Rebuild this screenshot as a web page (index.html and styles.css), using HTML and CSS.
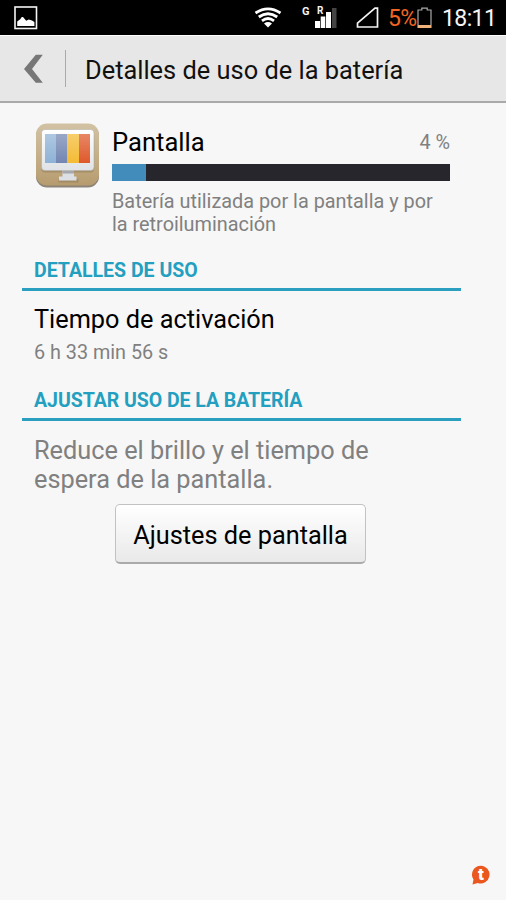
FILE: index.html
```html
<!DOCTYPE html>
<html lang="es">
<head>
<meta charset="utf-8">
<title>Detalles de uso de la batería</title>
<link rel="stylesheet" href="styles.css">
</head>
<body>
<div class="statusbar">
  <svg class="shot" width="24" height="24" viewBox="0 0 24 24"><rect x="1" y="1" width="21.500" height="21.500" fill="none" stroke="#f4f4f4" stroke-width="1.600"/><path d="M3.200 20v-4.500l3-2.300 1.600-2.100 1.200 0 3.200 3.600 2.600-1.200 3.200 1 2.400 1.500V20z" fill="#fff"/></svg>
  <svg class="wifi" width="28" height="22" viewBox="0 0 28 22"><g fill="none" stroke="#fff" stroke-width="2.800"><path d="M1.500 6Q14 -2.200 26.500 6"/><path d="M4.800 10Q14 3.400 23.200 10"/><path d="M8 13.800Q14 9.200 20 13.800"/></g><path d="M10 16.500Q14 13.600 18 16.500L14 20.500z" fill="#fff"/></svg>
  <span class="net">G</span>
  <span class="cell"><span class="roam">R</span><svg width="22" height="22" viewBox="0 0 22 22"><path d="M0 14h5v7H0zM5.700 9.500h4.600V21H5.700zM11 5h5v16h-5z" fill="#fff"/><path d="M17 1h4.500v20H17z" fill="#444"/></svg></span>
  <svg class="sim" width="24" height="22" viewBox="0 0 24 22"><path d="M21.500 1.200V20H1.500v-3.800L19 1.200z" fill="none" stroke="#f4f4f4" stroke-width="1.700"/></svg>
  <span class="level">5%</span>
  <svg class="battery" width="16" height="22" viewBox="0 0 16 22"><path d="M4.800 3V1.200h5.400V3h3.800v17.500H1V3z" fill="none" stroke="#aaa" stroke-width="1.200"/><path d="M1 18h13v3H1z" fill="#efb27a"/></svg>
  <span class="clock">18:11</span>
</div>
<header class="actionbar">
  <svg class="back" width="20" height="30" viewBox="0 0 20 30"><path d="M11.800 .8H18.800L8 15 18.800 28.800H11.800L0 15z" fill="#777"/></svg>
  <span class="divider"></span>
  <h1>Detalles de uso de la batería</h1>
</header>
<main>
  <section class="summary">
    <svg class="appicon" width="66" height="68" viewBox="0 0 66 68">
      <defs>
        <linearGradient id="tan" x2="0" y2="1"><stop stop-color="#d2c2a4"/><stop offset=".5" stop-color="#c5b08a"/><stop offset="1" stop-color="#b69b6e"/></linearGradient>
        <linearGradient id="frame" x2="0" y2="1"><stop stop-color="#fff"/><stop offset="1" stop-color="#dfe2e6"/></linearGradient>
        <linearGradient id="shine" x2="0" y2="1"><stop stop-color="#fff" stop-opacity=".28"/><stop offset="1" stop-color="#fff" stop-opacity="0"/></linearGradient>
      </defs>
      <rect x="2" y="3" width="63" height="62.500" rx="11" fill="#8c8477"/>
      <rect x="2" y="1.500" width="63" height="62" rx="11" fill="url(#tan)"/>
      <rect x="7.200" y="10" width="53" height="40.500" rx="4" fill="#8f7a55" opacity=".5"/>
      <path d="M24.500 57h20v3.500h-20z" fill="#8f7a55" opacity=".5"/>
      <path d="M28.500 48h11.500v6.500h2.500V58.500H25V54.500h3.500z" fill="#dce0e5"/>
      <path d="M28.500 48.500h11.500v3H28.500z" fill="#a5a9ad"/>
      <rect x="7.500" y="7.500" width="52.500" height="41" rx="3.500" fill="url(#frame)" stroke="#b5b1aa" stroke-width=".6"/>
      <path d="M11 12h11v29H11z" fill="#8eb2d6"/><path d="M22 12h11.500v29H22z" fill="#7386b2"/><path d="M33.500 12H45v29H33.500z" fill="#f4bb34"/><path d="M45 12H56v29H45z" fill="#df592b"/>
      <path d="M11 12h45v29H11z" fill="url(#shine)"/>
    </svg>
    <div class="info">
      <div class="row"><h2>Pantalla</h2><span class="percent">4 %</span></div>
      <div class="meter"><div class="fill"></div></div>
      <p>Batería utilizada por la pantalla y por<br>la retroiluminación</p>
    </div>
  </section>
  <h3>DETALLES DE USO</h3>
  <div class="item"><div class="label">Tiempo de activación</div><div class="value">6 h 33 min 56 s</div></div>
  <h3 class="adjust">AJUSTAR USO DE LA BATERÍA</h3>
  <p class="tip">Reduce el brillo y el tiempo de<br>espera de la pantalla.</p>
  <button>Ajustes de pantalla</button>
</main>
<div class="badge"><svg width="20" height="21" viewBox="0 0 20 21"><path d="M10 .8a8.800 8.800 0 1 1-3.200 17.100L1.500 19.500 2.500 14.500A8.800 8.800 0 0 1 10 .8z" fill="#ea571f"/></svg><span>t</span></div>
</body>
</html>
```

FILE: styles.css
```css
* { box-sizing: border-box; }
body { margin: 0; width: 506px; height: 900px; overflow: hidden; background: #f7f7f7; font-family: Roboto, sans-serif; color: #111; }
h1, h2, h3, p { margin: 0; font-weight: 400; white-space: nowrap; }
svg { display: block; flex: none; }
.statusbar { display: flex; height: 35px; background: #000; color: #f4f4f4; padding-left: 14px; }
.shot { margin-top: 6px; }
.wifi { margin: 7px 0 0 216px; }
.net { width: 13px; margin: 5px 0 0 20px; font-size: 11px; line-height: 14px; font-weight: 700; }
.cell { position: relative; margin-top: 7px; }
.roam { position: absolute; left: 2px; top: -2px; font-size: 10px; line-height: 12px; font-weight: 700; }
.sim { margin: 7px 0 0 19px; }
.level { width: 29px; margin-left: 8px; color: #f26522; font-size: 23px; line-height: 37px; letter-spacing: -.7px; }
.battery { margin-top: 7px; }
.clock { margin-left: 9px; font-size: 23px; line-height: 37px; letter-spacing: -.6px; }
.actionbar { display: flex; align-items: center; height: 68px; padding-left: 24px; background: #e7e7e7; border-top: 1px solid #fff; border-bottom: 2px solid #aaa; }
.divider { width: 1px; height: 37px; margin-left: 21px; background: #aaa; }
h1 { margin: 3px 0 0 19px; font-size: 25.4px; line-height: 36px; }
main { padding: 19px 45px 0 22px; }
.summary { display: flex; padding-left: 12px; }
.info { width: 338px; margin-left: 12px; padding-top: 5px; }
.row { display: flex; justify-content: space-between; height: 37px; }
h2 { font-size: 25.600px; line-height: 31px; color: #000; }
.percent { font-size: 19.800px; line-height: 32px; color: #808080; }
.meter { height: 17px; background: #26262c; }
.fill { width: 10%; height: 100%; background: #428cbb; }
.info p { margin-top: 9px; font-size: 19.850px; line-height: 23px; color: #808080; }
h3 { height: 33px; margin-top: 22px; padding-left: 12px; border-bottom: 3px solid #2a9fbf; color: #239fc0; font-size: 19.500px; line-height: 26px; font-weight: 700; }
.item { height: 97px; padding: 12px 0 0 12px; }
.label { font-size: 25.300px; line-height: 34px; color: #000; }
.value { font-size: 19.800px; line-height: 32px; color: #808080; }
.adjust { margin-top: 0; letter-spacing: -.05px; }
.tip { padding: 15px 0 0 12px; font-size: 25.300px; line-height: 29px; color: #808080; }
button { display: block; width: 251px; height: 60px; margin: 10px 0 0 93px; padding: 3px 0 0; border: 1px solid #c2c2c2; border-bottom: 2px solid #aaa; border-radius: 5px; background: linear-gradient(#fff, #e9e9e9); font: 25.300px/56px Roboto, sans-serif; color: #000; white-space: nowrap; }
.badge { position: absolute; left: 471px; top: 865px; }
.badge span { position: absolute; left: 7px; top: 0; color: #fff; font-size: 17px; line-height: 18px; font-weight: 900; }
```
